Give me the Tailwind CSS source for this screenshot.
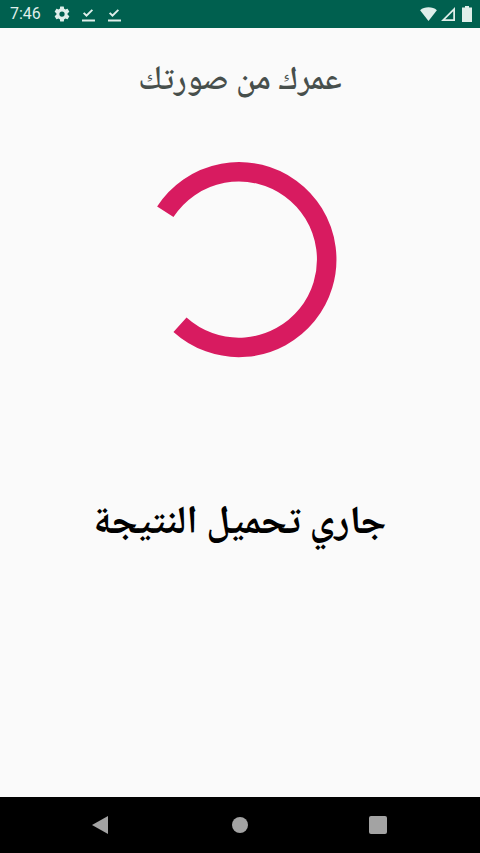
<!DOCTYPE html>
<html lang="ar">

<head>
    <meta charset="UTF-8">
    <meta name="viewport" content="width=device-width, initial-scale=1.0">
    <title>عمرك من صورتك</title>
    <script src="https://cdn.jsdelivr.net/npm/@tailwindcss/browser@4"></script>
</head>

<body class="w-[480px] h-[853px] overflow-hidden">
    <div class="flex flex-col h-full bg-[#fafafa]">

        <!-- status bar -->
        <div class="h-7 shrink-0 bg-[#00604f] flex items-center justify-between pl-[10px] pr-[8px] text-[#dfeeea]">
            <div class="flex items-center">
                <span class="text-[16px] font-['Roboto',sans-serif] w-[31px]">7:46</span>
                <svg class="w-[18px] h-[18px] ml-[12px]" viewBox="0 0 24 24" fill="currentColor">
                    <path d="M19.4 13c.04-.3.1-.65.1-1s-.06-.7-.1-1l2.1-1.65c.2-.15.25-.42.12-.64l-2-3.46c-.12-.22-.39-.3-.61-.22l-2.49 1a7.3 7.3 0 0 0-1.69-.98l-.38-2.65A.49.49 0 0 0 14 2h-4c-.25 0-.46.18-.49.42l-.38 2.65c-.61.25-1.17.59-1.69.98l-2.49-1c-.23-.09-.49 0-.61.22l-2 3.46c-.13.22-.07.49.12.64L4.57 11c-.04.32-.07.66-.07 1s.03.68.07 1l-2.11 1.65c-.19.15-.24.42-.12.64l2 3.46c.12.22.39.3.61.22l2.49-1c.52.4 1.08.73 1.69.98l.38 2.65c.03.24.24.42.49.42h4c.25 0 .46-.18.49-.42l.38-2.65c.61-.25 1.17-.59 1.69-.98l2.49 1c.23.09.49 0 .61-.22l2-3.46c.12-.22.07-.49-.12-.64zM12 15.5a3.5 3.5 0 1 1 0-7 3.5 3.5 0 0 1 0 7z" />
                </svg>
                <svg class="w-[18px] h-[18px] ml-[8px]" viewBox="0 0 24 24" fill="currentColor">
                    <path d="M4 19.300h17.300V22H4zM10 16 5.300 11.300l1.800-1.800 2.900 2.900 6.900-6.900 1.800 1.800z" />
                </svg>
                <svg class="w-[18px] h-[18px] ml-[8px]" viewBox="0 0 24 24" fill="currentColor">
                    <path d="M4 19.300h17.300V22H4zM10 16 5.300 11.300l1.800-1.800 2.900 2.900 6.900-6.900 1.800 1.800z" />
                </svg>
            </div>
            <div class="flex items-center">
                <svg class="w-[17px] h-[14px]" viewBox="0 0 24 20" fill="currentColor">
                    <path d="M12 20 0 4.500C3.200 1.800 7.400.5 12 .5s8.800 1.300 12 4z" />
                </svg>
                <svg class="w-[16px] h-[14px] ml-[3px]" viewBox="2 2 20 20" fill="currentColor">
                    <path fill-rule="evenodd" d="M22 2v20H2zM19.500 8 8 19.500h11.500z" />
                </svg>
                <svg class="w-[10px] h-[16px] ml-[6px]" viewBox="0 0 10 16" fill="currentColor">
                    <path d="M3 0h4v1.500h3V16H0V1.500h3z" />
                </svg>
            </div>
        </div>

        <!-- main content -->
        <div class="flex-1 flex flex-col items-center">
            <h1 dir="rtl" class="mt-[31px] h-[46px] leading-[46px] text-[33px] font-semibold text-[#474f4c] font-['Noto_Naskh_Arabic','Amiri','Scheherazade_New','DejaVu_Sans',serif]">عمرك من صورتك</h1>
            <svg class="mt-[45px] w-[220px] h-[220px]" viewBox="130 150 220 220" fill="none">
                <path d="M165.300 211.700A87.800 87.800 0 1 1 180 324.700" stroke="#d81b60" stroke-width="19.500" />
            </svg>
            <p dir="rtl" class="mt-[120px] h-[70px] leading-[70px] text-[39.500px] font-bold text-black font-['Noto_Naskh_Arabic','Amiri','Scheherazade_New','DejaVu_Sans',serif]">جاري تحميل النتيجة</p>
        </div>

        <!-- navigation bar -->
        <div class="h-14 shrink-0 bg-black flex items-center justify-between pl-[91px] pr-[93px]">
            <svg class="w-[18px] h-[20px]" viewBox="0 0 18 20" fill="#a3a3a3">
                <path d="M17 1v18L1 10z" />
            </svg>
            <div class="w-4 h-4 ml-[2px] rounded-full bg-[#a3a3a3]"></div>
            <div class="w-[18px] h-[18px] rounded-[2px] bg-[#a3a3a3]"></div>
        </div>
    </div>
</body>

</html>
